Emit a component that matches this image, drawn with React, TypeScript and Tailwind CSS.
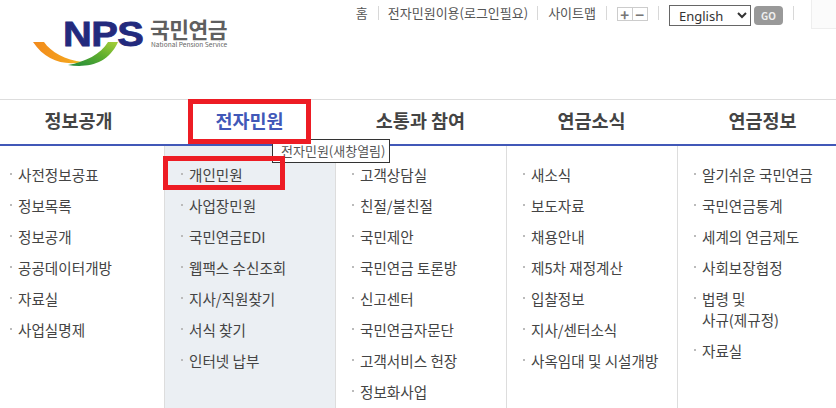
const columns = [
  { title: "정보공개", items: ["사전정보공표", "정보목록", "정보공개", "공공데이터개방", "자료실", "사업실명제"] },
  { title: "전자민원", active: true, items: ["개인민원", "사업장민원", "국민연금EDI", "웹팩스 수신조회", "지사/직원찾기", "서식 찾기", "인터넷 납부"] },
  { title: "소통과 참여", items: ["고객상담실", "친절/불친절", "국민제안", "국민연금 토론방", "신고센터", "국민연금자문단", "고객서비스 헌장", "정보화사업"] },
  { title: "연금소식", items: ["새소식", "보도자료", "채용안내", "제5차 재정계산", "입찰정보", "지사/센터소식", "사옥임대 및 시설개방"] },
  { title: "연금정보", items: ["알기쉬운 국민연금", "국민연금통계", "세계의 연금제도", "사회보장협정", "법령 및\n사규(제규정)", "자료실"] },
];

const font = { fontFamily: '"Noto Sans CJK KR", "Noto Sans", sans-serif' };

function Logo() {
  return (
    <div className="relative ml-[33px] mt-[19px] h-[50px] w-[196px]">
      <svg width="90" height="50" viewBox="0 0 90 50" className="absolute left-0 top-0">
        <defs>
          <linearGradient id="org" x1="0" y1="0" x2="1" y2="0">
            <stop offset="0" stopColor="#f28a1c" />
            <stop offset="0.7" stopColor="#f4a21e" />
            <stop offset="1" stopColor="#e8c82a" />
          </linearGradient>
          <linearGradient id="grn" x1="0" y1="1" x2="1" y2="0">
            <stop offset="0" stopColor="#1f8a3c" />
            <stop offset="0.55" stopColor="#5fae2e" />
            <stop offset="1" stopColor="#a9cf3a" />
          </linearGradient>
        </defs>
        <path d="M0 23 L11 23 C18 33 32 41 50 43 C30 47 12 41 0 23Z" fill="url(#org)" />
        <path d="M85 23 L75 23 C68 35 52 43 35 46 C55 49 75 45 85 23Z" fill="url(#grn)" />
      </svg>
      <span className="absolute left-[30px] top-[0px] origin-left scale-x-[1.14] text-[35px] font-bold leading-[30px] tracking-[-0.5px] text-[#232a7d] [-webkit-text-stroke:0.8px_#232a7d] [font-family:'Liberation_Sans',sans-serif]">NPS</span>
      <span className="absolute left-[117px] top-[-1px] text-[21.5px] font-semibold leading-[22px] tracking-[-0.5px] text-[#5f5f5f]">국민연금</span>
      <span className="absolute left-[118px] top-[21px] whitespace-nowrap text-[6.6px] leading-[8px] text-[#666666]">National Pension Service</span>
    </div>
  );
}

export default function App() {
  return (
    <div className="relative h-[408px] w-[836px] overflow-hidden bg-white text-[#444444]" style={font}>
      <header className="flex h-[99px] items-start justify-between">
        <Logo />
        <div className="flex h-[28px] items-start pt-[5px] text-[13px] leading-[15px] text-[#555555]">
          <span className="pr-[10px]">홈</span>
          <span className="mt-[1px] h-[14px] w-px bg-[#d8d8d8]" />
          <span className="px-[9px]">전자민원이용(로그인필요)</span>
          <span className="mt-[1px] h-[14px] w-px bg-[#d8d8d8]" />
          <span className="px-[10px]">사이트맵</span>
          <span className="mt-[1px] h-[14px] w-px bg-[#d8d8d8]" />
          <div className="ml-[10px] mt-[2px] flex h-[14px] w-[31px] border border-[#cccccc] text-[#777777]">
            <span className="flex w-1/2 items-center justify-center border-r border-[#cccccc] text-[15px] font-bold leading-none">+</span>
            <span className="flex w-1/2 items-center justify-center text-[15px] font-bold leading-none">−</span>
          </div>
          <span className="ml-[10px] mt-[1px] h-[14px] w-px bg-[#d8d8d8]" />
          <select className="ml-[10px] h-[21px] w-[82px] border border-[#666666] bg-white pl-[5px] text-[13px] text-[#333333]" defaultValue="English" style={{ fontFamily: '"Noto Sans", sans-serif' }}>
            <option>English</option>
          </select>
          <span className="ml-[3px] mt-[1px] flex h-[19px] w-[29px] items-center justify-center rounded-[4px] bg-[#999999] text-[10px] font-bold text-[#eeeeee]">GO</span>
          <span className="ml-[10px] mt-[1px] h-[14px] w-px bg-[#d8d8d8]" />
          <span className="-mt-[5px] ml-[17px] h-[29px] w-[25px] border-b border-l border-[#eeeeee] bg-[#fbfbfb]" />
        </div>
      </header>

      <nav className="-ml-[7px] w-[855px]">
        <div className="grid h-[47px] grid-cols-5 border-t border-b-[2px] border-t-[#dddddd] border-b-[#4158b8]">
          {columns.map((c) => (
            <div key={c.title} className={`flex items-center justify-center pb-[3px] text-[18.5px] font-semibold ${c.active ? "text-[#4158b8]" : "text-[#444444]"}`}>
              {c.title}
            </div>
          ))}
        </div>
        <div className="grid h-[262px] grid-cols-5">
          {columns.map((c) => (
            <ul key={c.title} className={`flex flex-col gap-[10px] border-l border-[#dddddd] pl-[24px] pr-[4px] pt-[18px] text-[14.6px] leading-[21px] text-[#444444] first:border-l-0 first:pl-[25px] ${c.active ? "bg-[#ebeff3]" : ""}`}>
              {c.items.map((item) => (
                <li key={item} className="relative whitespace-pre-line">
                  <span className="absolute -left-[8px] top-[9px] h-[2px] w-[2px] bg-[#bbbbbb]" />
                  {item}
                </li>
              ))}
            </ul>
          ))}
        </div>
      </nav>

      <div className="absolute left-[272px] top-[139px] whitespace-nowrap border border-[#333333] bg-white pl-[8px] pr-[4px] text-[13px] leading-[22px] text-[#555555]">전자민원(새창열림)</div>
      <div className="absolute left-[188px] top-[99px] h-[45px] w-[123px] border-[5px] border-[#ed1c24]" />
      <div className="absolute left-[163px] top-[156px] h-[34px] w-[122px] border-[5px] border-[#ed1c24]" />
    </div>
  );
}
